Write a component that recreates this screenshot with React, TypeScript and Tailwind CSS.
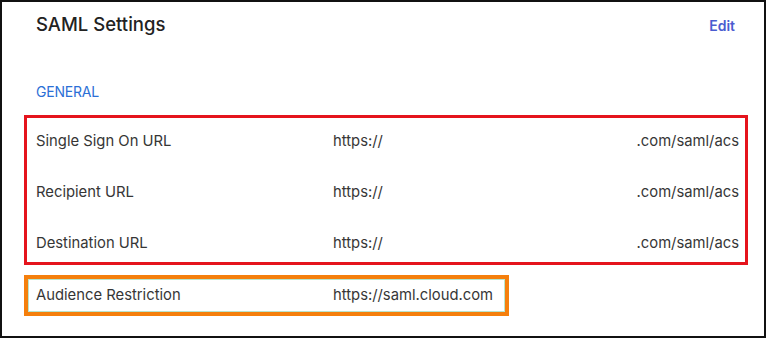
import React from 'react';

type Row = { label: string; start: string; end?: string };

const ssoRows: Row[] = [
   { label: "Single Sign On URL", start: "https://", end: ".com/saml/acs" },
   { label: "Recipient URL", start: "https://", end: ".com/saml/acs" },
   { label: "Destination URL", start: "https://", end: ".com/saml/acs" },
];

const App: React.FC = () => {
   return (
      <div
         className="w-[766px] h-[338px] border-2 border-[#111] bg-white text-[#363636]"
         style={{ fontFamily: 'Inter, "Noto Sans", sans-serif' }}
      >
         <div className="pl-[22px] pt-[8px]">
            <div className="flex justify-between items-start pr-[29px]">
               <h1 className="pl-[12px] text-[18.5px] leading-[28px] font-medium text-[#222]">SAML Settings</h1>
               <button className="mt-[6px] text-[14px] leading-[20px] font-semibold text-[#4a5cd0]">Edit</button>
            </div>

            <div className="mt-[44px] pl-[12px] text-[14px] leading-[20px] text-[#2b6fd6] tracking-[-0.2px]">GENERAL</div>

            <div className="mt-[13px] w-[724px] border-[3px] border-[#e5141d] flex flex-col gap-[31px] pt-[13px] pb-[9px] pl-[9px] pr-[6px]">
               {ssoRows.map((row) => (
                  <div key={row.label} className="flex items-center h-[20px] text-[14.8px]">
                     <div className="w-[297px] shrink-0">{row.label}</div>
                     <div className="flex-1 flex justify-between">
                        <span>{row.start}</span>
                        <span>{row.end}</span>
                     </div>
                  </div>
               ))}
            </div>

            <div className="mt-[10px] w-[485px] border-[4px] border-[#f57f0c]">
               <div className="border border-[#b9e4cc] h-[33px] flex items-center pl-[7px] text-[14.8px]">
                  <div className="w-[297px] shrink-0">Audience Restriction</div>
                  <div>https://saml.cloud.com</div>
               </div>
            </div>
         </div>
      </div>
   );
};

export default App;
